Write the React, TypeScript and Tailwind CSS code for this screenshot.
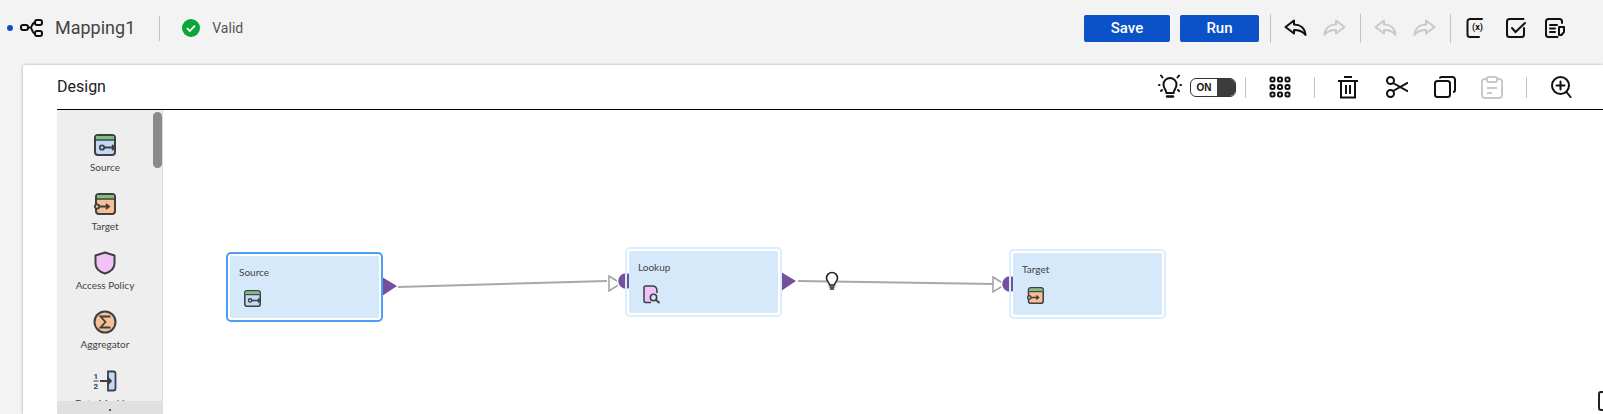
import React from 'react'

function Sep({ className = 'h-[29px] mx-0' }: { className?: string }) {
  return <div className={`w-px bg-[#c4c4c4] ${className}`} />
}

function MappingIcon() {
  return (
    <svg width="23" height="18" viewBox="0 0 23 18" fill="none" stroke="#111" strokeWidth="2">
      <rect x="1" y="6" width="7" height="5" rx="2" />
      <rect x="15" y="1" width="7" height="5" rx="2" />
      <rect x="15" y="12" width="7" height="5" rx="2" />
      <path d="M8 8.5h2.5c1.5 0 1.5-5 4.5-5M10.5 8.5c1.5 0 1.5 6 4.5 6" />
    </svg>
  )
}

function CheckBadge() {
  return (
    <svg width="18" height="18" viewBox="0 0 18 18">
      <circle cx="9" cy="9" r="9" fill="#0ca53a" />
      <path d="M5 9.2l2.8 2.8L13 6.6" fill="none" stroke="#fff" strokeWidth="1.8" />
    </svg>
  )
}

function Undo({ color = '#111', flip = false }: { color?: string; flip?: boolean }) {
  return (
    <svg width="23" height="18" viewBox="0 0 23 18" fill="none" stroke={color} strokeWidth="2" strokeLinejoin="round" className={flip ? '-scale-x-100' : ''}>
      <path d="M1.5 8L10 1.5V5.5C16 5.5 21 9 21.5 16C19 12.5 15 11 10 11V14.5Z" />
    </svg>
  )
}

function VarIcon() {
  return (
    <svg width="22" height="22" viewBox="0 0 22 22" fill="none" stroke="#111" strokeWidth="2">
      <path d="M6 2H4a2.500 2.500 0 0 0-2.500 2.500v13A2.500 2.500 0 0 0 4 20h9" strokeLinecap="round" />
      <path d="M6 2h10" strokeLinecap="round" />
      <text x="6" y="13" fontSize="9" fontWeight="700" fill="#111" stroke="none" fontFamily="Roboto, sans-serif">(x)</text>
    </svg>
  )
}

function ValidateIcon() {
  return (
    <svg width="22" height="22" viewBox="0 0 22 22" fill="none" stroke="#111" strokeWidth="2" strokeLinecap="round">
      <path d="M19 11v6.500a2.500 2.500 0 0 1-2.500 2.500h-12A2.500 2.500 0 0 1 2 17.500v-13A2.500 2.500 0 0 1 4.500 2h14" />
      <path d="M7 11l3.500 4L20 6" />
    </svg>
  )
}

function NotesIcon() {
  return (
    <svg width="22" height="22" viewBox="0 0 22 22" fill="none" stroke="#111" strokeWidth="2" strokeLinecap="round">
      <path d="M18 6V4.500A2.500 2.500 0 0 0 15.500 2h-11A2.500 2.500 0 0 0 2 4.500v13A2.500 2.500 0 0 0 4.500 20h9" />
      <path d="M6 8h7M6 11.500h5M6 15h5" />
      <path d="M15 10h5v5l-2.500 3H15z" strokeLinejoin="round" />
    </svg>
  )
}

function BulbRays() {
  return (
    <svg width="24" height="26" viewBox="0 0 24 26" fill="none" stroke="#111" strokeWidth="2" strokeLinecap="round">
      <path d="M8.500 19c0-3-3-4.500-3-8.500a6.500 6.500 0 0 1 13 0c0 4-3 5.500-3 8.500z" />
      <path d="M9 22.500h6" strokeWidth="2.500" />
      <path d="M3 1.500l1.500 2M21 1.500l-1.500 2M1 11h.5M22.500 11h.5M3 17l1-1M21 17l-1-1" />
    </svg>
  )
}

function Toggle() {
  return (
    <div className="flex h-[19px] w-[46px] overflow-hidden rounded-[6px] border border-[#333] bg-white">
      <span className="w-[26px] text-center font-['Liberation_Sans',sans-serif] text-[10px] font-bold leading-[17px] text-[#111]">ON</span>
      <span className="flex-1 bg-[#3b3b3b]" />
    </div>
  )
}

function GridIcon() {
  return (
    <svg width="22" height="22" viewBox="0 0 22 22" fill="none" stroke="#111" strokeWidth="2">
      {[0, 1, 2].map((r) =>
        [0, 1, 2].map((c) => <rect key={`${r}-${c}`} x={1.500 + c * 7.500} y={1.500 + r * 7.500} width="4" height="4" rx="1.500" />),
      )}
    </svg>
  )
}

function TrashIcon() {
  return (
    <svg width="20" height="23" viewBox="0 0 20 23" fill="none" stroke="#111" strokeWidth="2">
      <path d="M6 1h8" />
      <path d="M0 5h20" />
      <path d="M3 5v16.500h14V5" />
      <path d="M8 9v9M12 9v9" />
    </svg>
  )
}

function ScissorsIcon() {
  return (
    <svg width="22" height="22" viewBox="0 0 22 22" fill="none" stroke="#111" strokeWidth="2">
      <circle cx="4.500" cy="4.500" r="3.500" />
      <circle cx="4.500" cy="17.500" r="3.500" />
      <path d="M7 7l15 8.500M7 15L22 6.500" />
    </svg>
  )
}

function CopyIcon() {
  return (
    <svg width="22" height="22" viewBox="0 0 22 22" fill="none" stroke="#111" strokeWidth="2">
      <rect x="1" y="5" width="15" height="16" rx="2.500" />
      <path d="M6 2.500A1.500 1.500 0 0 1 7.500 1H18.500A2.500 2.500 0 0 1 21 3.500V14A2 2 0 0 1 19 16" />
    </svg>
  )
}

function PasteIcon() {
  return (
    <svg width="22" height="23" viewBox="0 0 22 23" fill="none" stroke="#c9c9c9" strokeWidth="2">
      <path d="M6 3H3.500A2.500 2.500 0 0 0 1 5.500v14A2.500 2.500 0 0 0 3.500 22h15a2.500 2.500 0 0 0 2.500-2.500v-14A2.500 2.500 0 0 0 18.500 3H16" />
      <rect x="6" y="1" width="10" height="5" rx="1.500" />
      <path d="M6 12h10M6 17h5" />
    </svg>
  )
}

function ZoomInIcon() {
  return (
    <svg width="21" height="22" viewBox="0 0 21 22" fill="none" stroke="#111" strokeWidth="2" strokeLinecap="round">
      <circle cx="9.500" cy="9.500" r="8.500" />
      <path d="M9.500 5.500v8M5.500 9.500h8M15.500 16l4 5" />
    </svg>
  )
}

function SourceGlyph({ size = 22 }: { size?: number }) {
  return (
    <svg width={size} height={size} viewBox="0 0 22 22" fill="none">
      <rect x="1" y="1" width="20" height="20" rx="3" fill="#c5d9f7" stroke="#3c4043" strokeWidth="2" />
      <rect x="2" y="2" width="18" height="3.500" fill="#7cc07f" />
      <path d="M2 6h18" stroke="#3c4043" strokeWidth="1.500" />
      <circle cx="8" cy="13.500" r="2.200" stroke="#3c4043" strokeWidth="1.800" />
      <path d="M10 13.500h11M18 11l3 2.500-3 2.500" stroke="#3c4043" strokeWidth="1.800" />
    </svg>
  )
}

function TargetGlyph({ size = 22 }: { size?: number }) {
  return (
    <svg width={size} height={size} viewBox="0 0 22 22" fill="none">
      <rect x="2" y="1" width="19" height="20" rx="3" fill="#f9bf94" stroke="#3c4043" strokeWidth="2" />
      <rect x="3" y="2" width="17" height="3.500" fill="#7cc07f" />
      <path d="M3 6h17" stroke="#3c4043" strokeWidth="1.500" />
      <circle cx="3" cy="13.500" r="2.200" fill="#f9bf94" stroke="#3c4043" strokeWidth="1.800" />
      <path d="M5 13.500h10M12 11l3 2.500-3 2.500" stroke="#3c4043" strokeWidth="1.800" />
    </svg>
  )
}

function ShieldGlyph() {
  return (
    <svg width="22" height="24" viewBox="0 0 22 24">
      <path d="M11 1.500l9.500 3v8c0 5-4.500 8.500-9.500 10-5-1.500-9.500-5-9.500-10v-8z" fill="#f1c2f6" stroke="#3c4043" strokeWidth="2" strokeLinejoin="round" />
    </svg>
  )
}

function SigmaGlyph() {
  return (
    <svg width="24" height="24" viewBox="0 0 24 24" fill="none">
      <circle cx="12" cy="12" r="10.500" fill="#f9bf94" stroke="#3c4043" strokeWidth="2" />
      <path d="M16.500 7.500V6.500h-9l5 5.500-5 5.500h9v-1" stroke="#3c4043" strokeWidth="1.800" />
    </svg>
  )
}

function MaskerGlyph() {
  return (
    <svg width="24" height="22" viewBox="0 0 24 22" fill="none">
      <path d="M15 1.500h5.500a2 2 0 0 1 2 2v15a2 2 0 0 1-2 2H15z" fill="#c5d9f7" stroke="#3c4043" strokeWidth="1.800" />
      <path d="M7 11h11M14.500 7.500L18 11l-3.500 3.500" stroke="#3c4043" strokeWidth="1.800" />
      <text x="0.500" y="9" fontSize="8" fontWeight="700" fill="#3c4043" fontFamily="Roboto, sans-serif">1</text>
      <path d="M0.500 11h5" stroke="#3c4043" strokeWidth="1" />
      <text x="0.500" y="19" fontSize="8" fontWeight="700" fill="#3c4043" fontFamily="Roboto, sans-serif">2</text>
    </svg>
  )
}

function LookupGlyph() {
  return (
    <svg width="18" height="19" viewBox="0 0 18 19" fill="none">
      <path d="M1 1h8l5 5v4H9v7H1z" fill="#f1c2f6" />
      <path d="M8 17.500H2.500A1.500 1.500 0 0 1 1 16V2.500A1.500 1.500 0 0 1 2.500 1H9c3 0 5 2 5 5v2" stroke="#3c4043" strokeWidth="1.500" />
      <circle cx="10.500" cy="12.500" r="3.200" stroke="#3c4043" strokeWidth="1.600" />
      <path d="M13 15l3.500 3" stroke="#3c4043" strokeWidth="1.800" />
    </svg>
  )
}

function PaletteItem({ label, icon }: { label: string; icon: React.ReactNode }) {
  return (
    <div className="flex h-[59px] flex-col items-center">
      <div className="flex h-[24px] items-center">{icon}</div>
      <span className="mt-[3px] whitespace-nowrap font-['Lato',sans-serif] text-[10px] leading-[14px] text-[#444]">{label}</span>
    </div>
  )
}

const nodeCls = 'absolute h-[70px] w-[157px] rounded-[5px] border-2 p-[2px]'

function CanvasNode({ label, icon, pos, selected }: { label: string; icon: React.ReactNode; pos: string; selected?: boolean }) {
  return (
    <div className={`${nodeCls} ${pos} ${selected ? 'border-[#4a9ff5]' : 'border-[#dcedfc]'}`}>
      <div className="h-full rounded-[2px] bg-[#d5e9fb] pl-[9px] pt-[9px]">
        <div className="font-['Lato',sans-serif] text-[10px] leading-[14px] text-[#444]">{label}</div>
        <div className="ml-[5px] mt-[11px]">{icon}</div>
      </div>
    </div>
  )
}

function Edges() {
  return (
    <svg className="absolute inset-0" width="1441" height="304" fill="none">
      {/* offsets are relative to the canvas, which starts at 162,110 */}
      <path d="M235 177L444 171" stroke="#a8a8a8" strokeWidth="2" />
      <path d="M635 171L832 174" stroke="#a8a8a8" strokeWidth="2" />
      <path d="M219 167l15 9-15 10z" fill="#7350a0" />
      <path d="M618 162l15 9-15 10z" fill="#7350a0" />
      <path d="M446 166l12 7.500-12 7.500z" fill="#fff" stroke="#a0a0a0" strokeWidth="1.500" />
      <path d="M830 167l12 7.500-12 7.500z" fill="#fff" stroke="#a0a0a0" strokeWidth="1.500" />
      <circle cx="463" cy="171" r="8.500" fill="#7350a0" stroke="#fff" strokeWidth="1.500" />
      <circle cx="847" cy="174" r="8.500" fill="#7350a0" stroke="#fff" strokeWidth="1.500" />
      <g transform="translate(662 162)" stroke="#222" strokeWidth="1.600" strokeLinecap="round">
        <path d="M4.500 13c0-2.500-3-3.500-3-7a5.500 5.500 0 0 1 11 0c0 3.500-3 4.500-3 7z" fill="#fff" />
        <path d="M5 15h4M5.500 17h3" />
      </g>
    </svg>
  )
}

export default function App() {
  return (
    <div className="h-[414px] w-[1603px] overflow-hidden bg-[#f3f3f3] font-['Roboto',sans-serif]">
      <header className="flex h-[65px] items-center justify-between pb-[9px]">
        <div className="flex items-center">
          <span className="ml-[7px] h-[6px] w-[6px] rounded-full bg-[#0b52c9]" />
          <span className="ml-[7px] flex"><MappingIcon /></span>
          <span className="ml-[12px] text-[18px] leading-6 text-[#444]">Mapping1</span>
          <Sep className="ml-[24px] h-[25px]" />
          <span className="ml-[22px] flex"><CheckBadge /></span>
          <span className="ml-[12px] text-[14px] leading-5 text-[#555]">Valid</span>
        </div>
        <div className="flex items-center pr-[37px]">
          <button className="h-[27px] w-[86px] rounded-[2px] bg-[#0b52c9] text-[15px] font-medium text-white">Save</button>
          <button className="ml-[10px] h-[27px] w-[79px] rounded-[2px] bg-[#0b52c9] text-[15px] font-medium text-white">Run</button>
          <Sep className="ml-[11px] h-[29px]" />
          <span className="ml-[13px] flex"><Undo /></span>
          <span className="ml-[16px] flex"><Undo color="#c9c9c9" flip /></span>
          <Sep className="ml-[14px] h-[29px]" />
          <span className="ml-[13px] flex"><Undo color="#c9c9c9" /></span>
          <span className="ml-[16px] flex"><Undo color="#c9c9c9" flip /></span>
          <Sep className="ml-[14px] h-[29px]" />
          <span className="ml-[15px] flex"><VarIcon /></span>
          <span className="ml-[17px] flex"><ValidateIcon /></span>
          <span className="ml-[17px] flex"><NotesIcon /></span>
        </div>
      </header>
      <main className="ml-[23px] flex h-[349px] flex-col bg-white pl-[34px] shadow-[0_0_3px_rgba(0,0,0,0.3)]">
        <div className="flex h-[45px] shrink-0 items-center justify-between border-b border-black pr-[31px]">
          <span className="text-[16px] leading-5 text-[#222]">Design</span>
          <div className="flex items-center">
            <BulbRays />
            <span className="ml-[8px]"><Toggle /></span>
            <Sep className="ml-[9px] h-[21px]" />
            <span className="ml-[23px] flex"><GridIcon /></span>
            <Sep className="ml-[23px] h-[21px]" />
            <span className="ml-[23px] flex"><TrashIcon /></span>
            <span className="ml-[28px] flex"><ScissorsIcon /></span>
            <span className="ml-[26px] flex"><CopyIcon /></span>
            <span className="ml-[25px] flex"><PasteIcon /></span>
            <Sep className="ml-[23px] h-[21px]" />
            <span className="ml-[24px] flex"><ZoomInIcon /></span>
          </div>
        </div>
        <div className="flex min-h-0 flex-1">
          <aside className="relative w-[106px] shrink-0 overflow-hidden border-r border-[#ddd] bg-[#eeeeee]">
            <div className="w-[96px] pt-[23px]">
              <PaletteItem label="Source" icon={<SourceGlyph />} />
              <PaletteItem label="Target" icon={<TargetGlyph />} />
              <PaletteItem label="Access Policy" icon={<ShieldGlyph />} />
              <PaletteItem label="Aggregator" icon={<SigmaGlyph />} />
              <PaletteItem label="Data Masking" icon={<MaskerGlyph />} />
            </div>
            <div className="absolute right-0 top-[2px] h-[56px] w-[9px] rounded-full bg-[#8a8a8a]" />
            <div className="absolute bottom-0 left-0 flex h-[13px] w-full justify-center bg-[#e0e0e0] pt-[8px]">
              <span className="h-[2px] w-[2px] rounded-full bg-[#222]" />
            </div>
          </aside>
          <section className="relative flex-1 overflow-hidden">
            <Edges />
            <CanvasNode label="Source" selected pos="left-[63px] top-[142px]" icon={<SourceGlyph size={17} />} />
            <CanvasNode label="Lookup" pos="left-[462px] top-[137px]" icon={<LookupGlyph />} />
            <CanvasNode label="Target" pos="left-[846px] top-[139px]" icon={<TargetGlyph size={17} />} />
            <div className="absolute right-0 top-[281px] h-[20px] w-[5px] rounded-l-[3px] border-2 border-r-0 border-[#222]" />
          </section>
        </div>
      </main>
    </div>
  )
}
